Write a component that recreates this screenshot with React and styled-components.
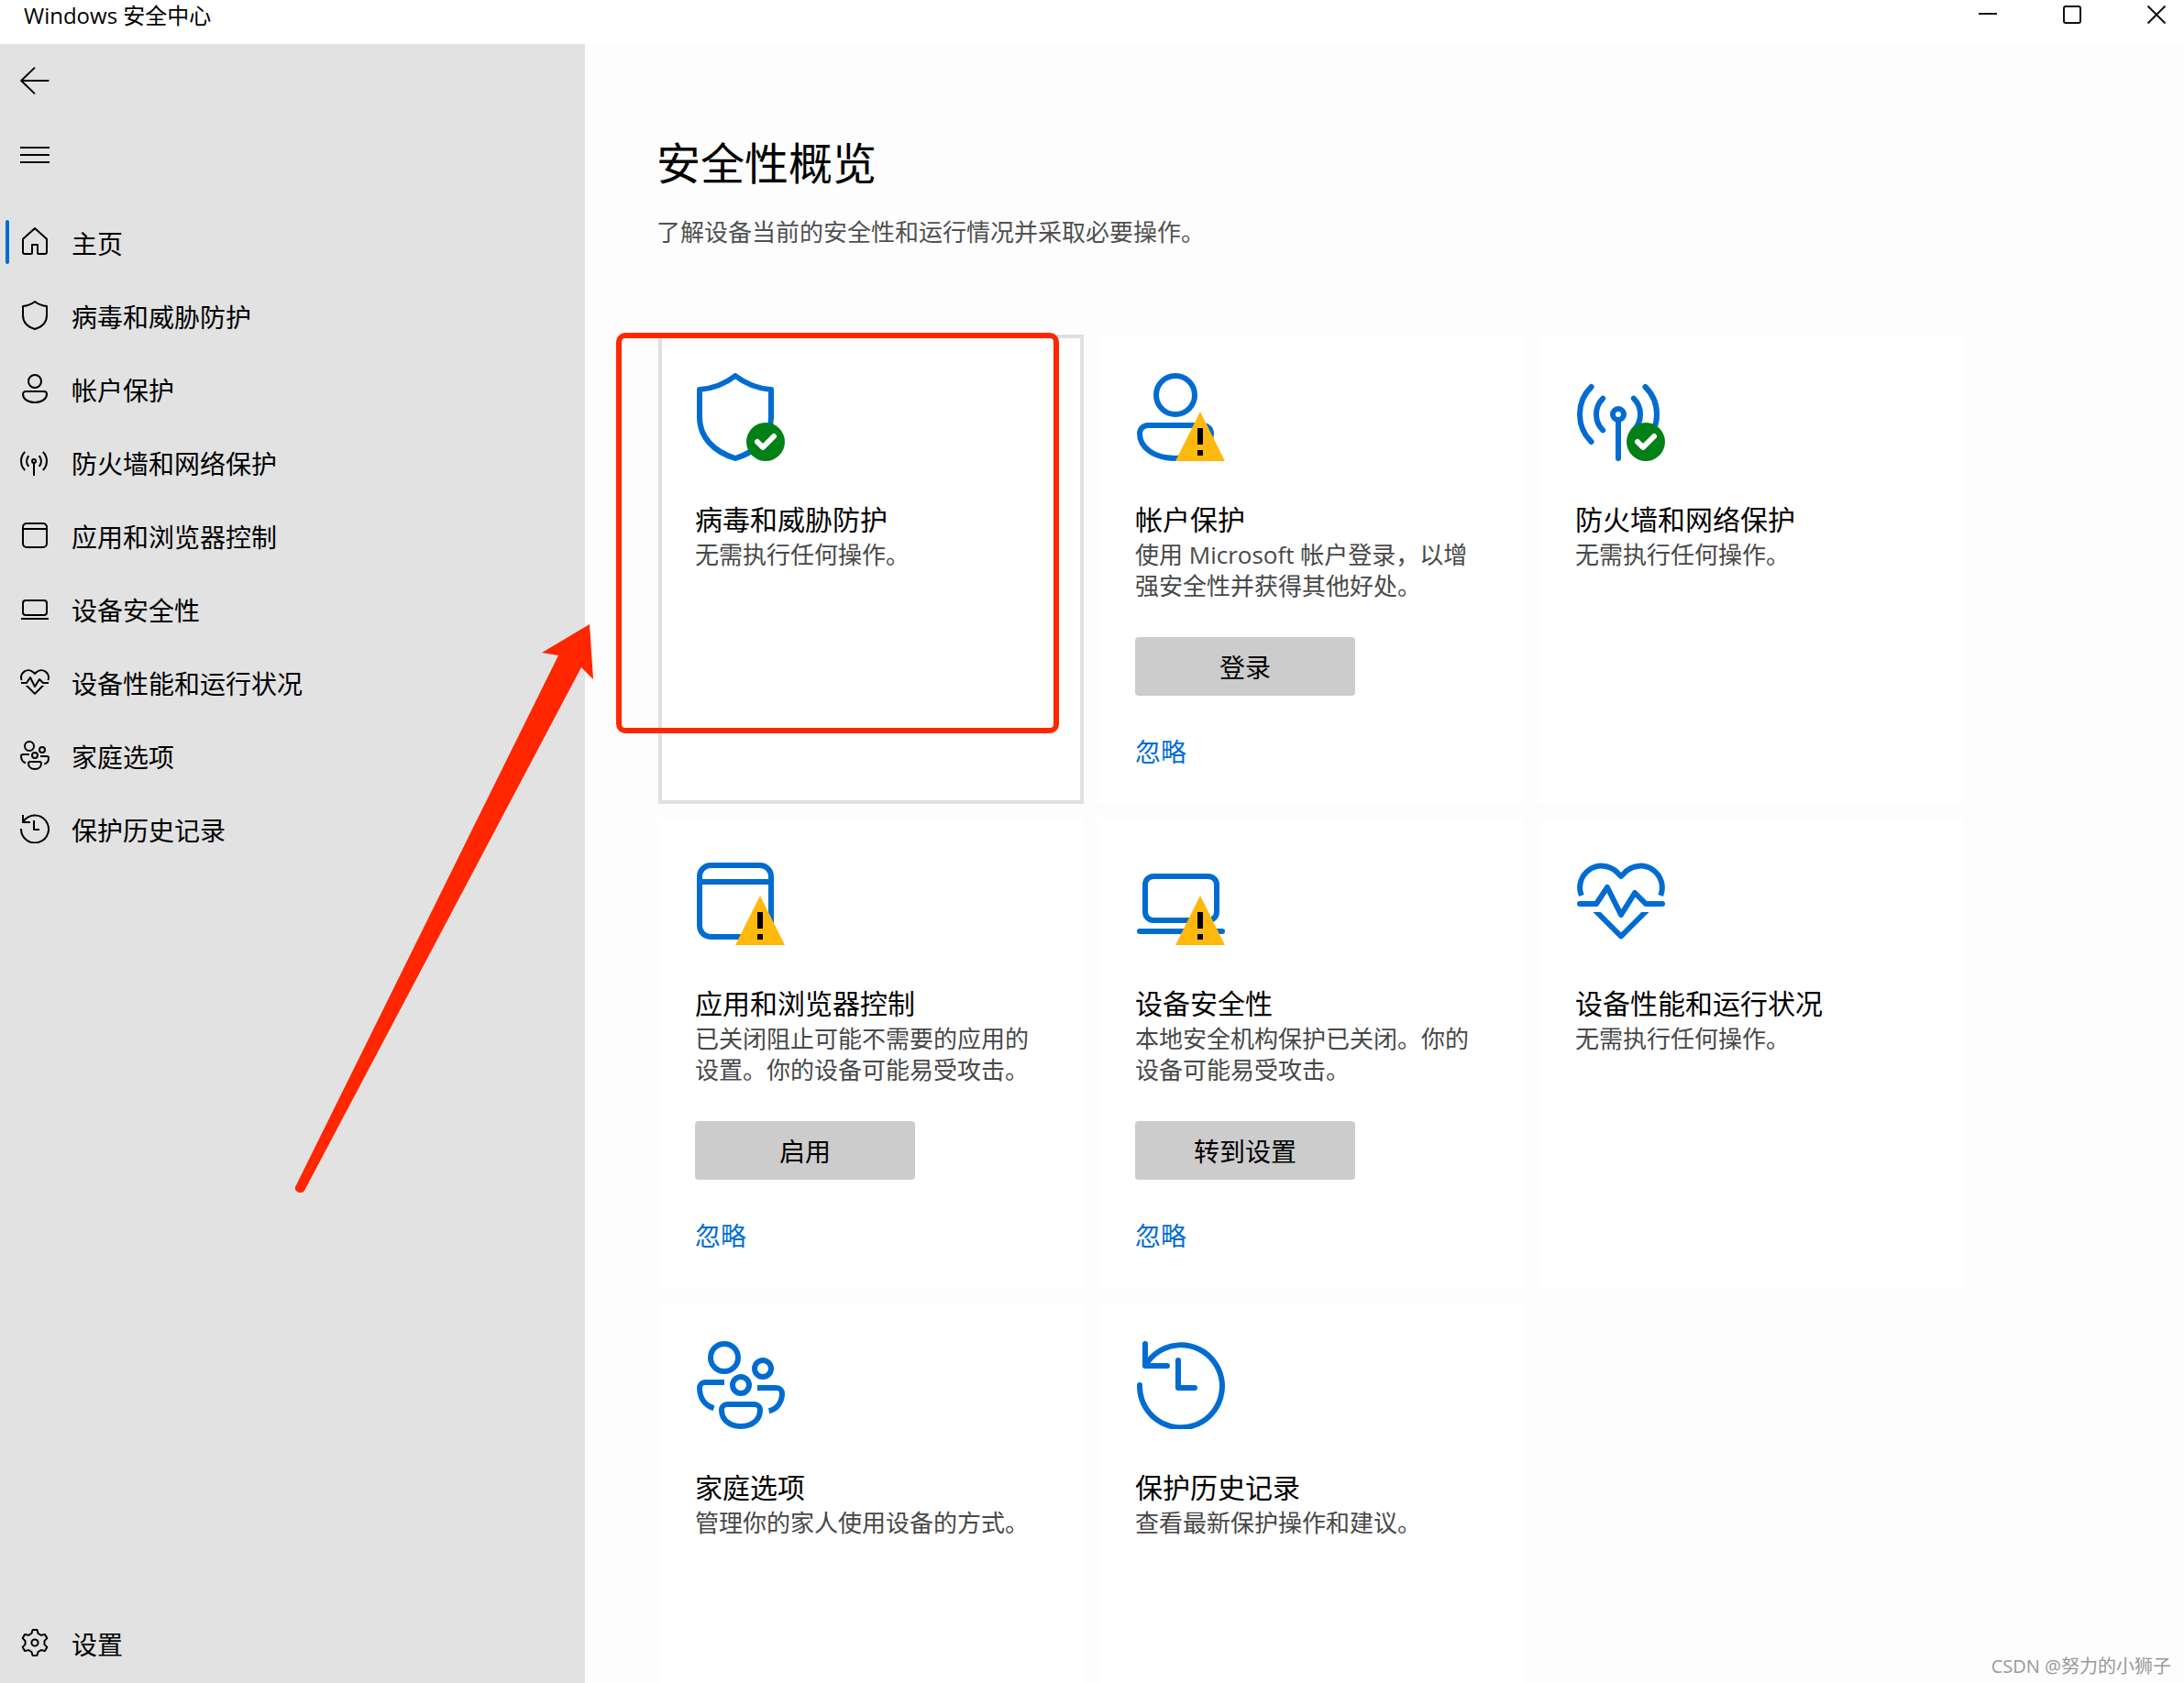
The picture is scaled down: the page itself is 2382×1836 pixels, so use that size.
import React, { useState } from 'react';
import styled, { createGlobalStyle } from 'styled-components';

// 齿轮轮廓:六个齿,每个齿由四个点组成
const TOOTH = [
  [-1.8, -5],
  [-1.2, -7],
  [1.2, -7],
  [1.8, -5],
];

const gearPoints = [0, 60, 120, 180, 240, 300]
  .flatMap(deg => {
    const a = (deg * Math.PI) / 180;
    return TOOTH.map(([x, y]) => [
      8 + x * Math.cos(a) - y * Math.sin(a),
      8 + x * Math.sin(a) + y * Math.cos(a),
    ]);
  })
  .map(p => p.join(','))
  .join(' ');

const shapes = {
  back: <path d="M15.7 8H.6M8 .8.6 8 8 15.2" />,
  menu: <path d="M0 4.5h16M0 8.5h16M0 12.5h16" />,
  home: (
    <path d="M8 .5 1.5 6.4v7.1a1 1 0 0 0 1 1H6a.5.5 0 0 0 .5-.5V9.5h3V14a.5.5 0 0 0 .5.5h3.5a1 1 0 0 0 1-1V6.4z" />
  ),
  shield: (
    <path d="M7 .5C5.2 1.9 2.9 2.8.5 3v5c0 3.7 2.6 6.3 6.5 7.5 3.9-1.2 6.5-3.8 6.5-7.5V3C11.1 2.8 8.8 1.9 7 .5z" />
  ),
  account: (
    <>
      <circle cx="7" cy="4" r="3.5" />
      <path d="M2 9.5h10a1.5 1.5 0 0 1 1.5 1.5c0 2.5-2.6 4.5-6.5 4.5S.5 13.5.5 11A1.5 1.5 0 0 1 2 9.5z" />
    </>
  ),
  network: (
    <>
      <circle cx="7.5" cy="7.5" r="1" />
      <path d="M7.5 8.5v7M2.6 2.5a7 7 0 0 0 0 10M4.7 4.6a4.1 4.1 0 0 0 0 5.8M10.3 4.6a4.1 4.1 0 0 1 0 5.8M12.4 2.5a7 7 0 0 1 0 10" />
    </>
  ),
  browser: (
    <>
      <rect x="0.5" y="1.5" width="13" height="13" rx="2" />
      <path d="M.5 4.5h13" />
    </>
  ),
  device: (
    <>
      <rect x="1.5" y="3.5" width="13" height="8" rx="1.5" />
      <path d="M.5 13.5h15" />
    </>
  ),
  health: (
    <>
      <path
        strokeLinecap="butt"
        d="M.8 7A3.95 3.95 0 0 1 7.1 2.6L8 3.5l.9-.9A3.95 3.95 0 0 1 15.2 7"
      />
      <path d="M.5 8.5h3l2-3 2.5 5 2.5-4 2 2h3" />
      <path
        fill="currentColor"
        stroke="none"
        d="M2.9 10h1.4L8 13.7l3.7-3.7h1.4l-4.75 4.75a.5.5 0 0 1-.7 0z"
      />
    </>
  ),
  family: (
    <>
      <circle cx="5" cy="3" r="2.5" />
      <circle cx="12" cy="5" r="1.5" />
      <circle cx="8" cy="8" r="1.5" />
      <path
        strokeLinecap="butt"
        d="M5 7.5H1.5a1 1 0 0 0-1 1C.5 10.4 1.5 11.7 3.1 12.2M11 8.5h3.5a1 1 0 0 1 1 1c0 1.6-.9 2.9-2.4 3.2"
      />
      <path d="M5.5 11.5h5a1 1 0 0 1 1 1c0 1.8-1.4 3-3.5 3s-3.5-1.2-3.5-3a1 1 0 0 1 1-1z" />
    </>
  ),
  history: (
    <path d="M.5 8A7.5 7.5 0 1 0 1.6 4.3M1.5.5v4h4M7.5 3.5v5h3" />
  ),
  settings: (
    <>
      <polygon points={gearPoints} />
      <circle cx="8" cy="8" r="1.8" />
    </>
  ),
};

const badges = {
  ok: (
    <>
      <circle cx="12.5" cy="12.5" r="3.5" fill="#008017" stroke="none" />
      <path d="M11 12.5l1 1 2-2" stroke="#fff" />
    </>
  ),
  warn: (
    <>
      <path d="M11.5 7 16 16H7z" fill="#ffb90d" stroke="none" />
      <path d="M11 10h1v3h-1zM11 14h1v1h-1z" fill="#000" stroke="none" />
    </>
  ),
};

// 宽 14 格的图标在侧栏里需要居中
const narrow = ['shield', 'account', 'browser'];

const nav = [
  { icon: 'home', text: '主页' },
  { icon: 'shield', text: '病毒和威胁防护' },
  { icon: 'account', text: '帐户保护' },
  { icon: 'network', text: '防火墙和网络保护' },
  { icon: 'browser', text: '应用和浏览器控制' },
  { icon: 'device', text: '设备安全性' },
  { icon: 'health', text: '设备性能和运行状况' },
  { icon: 'family', text: '家庭选项' },
  { icon: 'history', text: '保护历史记录' },
];

const tiles = [
  {
    icon: 'shield',
    badge: 'ok',
    title: '病毒和威胁防护',
    desc: '无需执行任何操作。',
    focused: true,
  },
  {
    icon: 'account',
    badge: 'warn',
    title: '帐户保护',
    desc: '使用 Microsoft 帐户登录，以增强安全性并获得其他好处。',
    action: '登录',
  },
  {
    icon: 'network',
    badge: 'ok',
    title: '防火墙和网络保护',
    desc: '无需执行任何操作。',
  },
  {
    icon: 'browser',
    badge: 'warn',
    title: '应用和浏览器控制',
    desc: '已关闭阻止可能不需要的应用的设置。你的设备可能易受攻击。',
    action: '启用',
  },
  {
    icon: 'device',
    badge: 'warn',
    title: '设备安全性',
    desc: '本地安全机构保护已关闭。你的设备可能易受攻击。',
    action: '转到设置',
  },
  { icon: 'health', title: '设备性能和运行状况', desc: '无需执行任何操作。' },
  { icon: 'family', title: '家庭选项', desc: '管理你的家人使用设备的方式。' },
  { icon: 'history', title: '保护历史记录', desc: '查看最新保护操作和建议。' },
];

export default function App() {
  const [current, setCurrent] = useState('主页');

  return (
    <Window>
      <GlobalStyle />
      <TitleBar>
        <Caption>Windows 安全中心</Caption>
        <Controls>
          <ControlBtn type="button" aria-label="最小化">
            <svg viewBox="0 0 20 20">
              <path d="M0 9h20" />
            </svg>
          </ControlBtn>
          <ControlBtn type="button" aria-label="最大化">
            <svg viewBox="0 0 20 20">
              <rect x="1" y="1" width="18" height="18" rx="2" />
            </svg>
          </ControlBtn>
          <ControlBtn type="button" aria-label="关闭">
            <svg viewBox="0 0 20 20">
              <path d="M.5.5l19 19M19.5.5l-19 19" />
            </svg>
          </ControlBtn>
        </Controls>
      </TitleBar>

      <Body>
        {/* 侧栏 */}
        <Sidebar>
          <IconBtn type="button" aria-label="返回">
            <NavIcon viewBox="0 0 16 16">{shapes.back}</NavIcon>
          </IconBtn>
          <IconBtn type="button" aria-label="菜单">
            <NavIcon viewBox="0 0 16 16">{shapes.menu}</NavIcon>
          </IconBtn>
          <NavList>
            {nav.map(({ icon, text }) => (
              <NavLink
                key={text}
                href="#"
                $active={current === text}
                onClick={() => setCurrent(text)}
              >
                <NavIcon
                  viewBox={narrow.includes(icon) ? '-1 0 16 16' : '0 0 16 16'}
                >
                  {shapes[icon]}
                </NavIcon>
                <NavText>{text}</NavText>
              </NavLink>
            ))}
          </NavList>
          <NavLink
            href="#"
            $active={current === '设置'}
            onClick={() => setCurrent('设置')}
          >
            <NavIcon viewBox="0 0 16 16">{shapes.settings}</NavIcon>
            <NavText>设置</NavText>
          </NavLink>
        </Sidebar>

        {/* 内容 */}
        <Main>
          <Heading>安全性概览</Heading>
          <Lead>了解设备当前的安全性和运行情况并采取必要操作。</Lead>
          <Tiles>
            {tiles.map(({ icon, badge, title, desc, action, focused }) => (
              <Tile key={title} $focused={focused}>
                <TileIcon viewBox="0 0 16 16">
                  {shapes[icon]}
                  {badges[badge]}
                </TileIcon>
                <TileTitle>{title}</TileTitle>
                <TileDesc>{desc}</TileDesc>
                {action && (
                  <>
                    <ActionBtn type="button">{action}</ActionBtn>
                    <Dismiss href="#">忽略</Dismiss>
                  </>
                )}
              </Tile>
            ))}
          </Tiles>
        </Main>
      </Body>

      {/* 标注 */}
      <Marker />
      <Arrow viewBox="0 0 340 640">
        <path d="M323 1 271 32l18 3L2 615c-1 3 2 6 6 6 3 0 4-2 5-4L314 48l13 13z" />
      </Arrow>
      <Watermark>CSDN @努力的小狮子</Watermark>
    </Window>
  );
}

const GlobalStyle = createGlobalStyle`
  * {
    box-sizing: border-box;
  }
  body {
    margin: 0;
    font-family: 'Open Sans', 'Noto Sans CJK SC', sans-serif;
    color: #000;
    background-color: #fdfdfd;
  }
  button {
    font-family: inherit;
    color: inherit;
    border: 0;
    padding: 0;
  }
  a {
    text-decoration: none;
  }
`;

const Window = styled.div`
  height: 100vh;
  display: flex;
  flex-direction: column;
  position: relative;
  overflow: hidden;
`;

const TitleBar = styled.header`
  height: 48px;
  flex-shrink: 0;
  padding: 0 20px 16px 26px;
  display: flex;
  align-items: center;
  justify-content: space-between;
  background-color: #fff;
`;

const Caption = styled.span`
  padding-top: 2px;
  font-size: 24px;
  line-height: 32px;
`;

const Controls = styled.div`
  display: flex;
  gap: 72px;
`;

const ControlBtn = styled.button`
  width: 20px;
  height: 20px;
  background: none;
  svg {
    display: block;
    fill: none;
    stroke: #111;
    stroke-width: 2;
  }
`;

const Body = styled.div`
  flex: 1;
  min-height: 0;
  display: flex;
`;

const Sidebar = styled.aside`
  width: 638px;
  flex-shrink: 0;
  padding-bottom: 4px;
  display: flex;
  flex-direction: column;
  background-color: #e2e2e2;
`;

const IconBtn = styled.button`
  width: 76px;
  height: 80px;
  display: flex;
  align-items: center;
  justify-content: center;
  background: none;
`;

const NavIcon = styled.svg`
  width: 32px;
  height: 32px;
  flex-shrink: 0;
  fill: none;
  stroke: currentColor;
  stroke-width: 1;
  stroke-linejoin: round;
`;

const NavList = styled.nav`
  flex: 1;
  margin-top: 16px;
`;

const NavLink = styled.a`
  height: 80px;
  padding-left: 22px;
  display: flex;
  align-items: center;
  gap: 24px;
  position: relative;
  color: #000;
  &::before {
    content: '';
    width: 4px;
    height: 48px;
    border-radius: 2px;
    background-color: ${props => (props.$active ? '#006cd0' : 'transparent')};
    position: absolute;
    left: 6px;
    top: 16px;
  }
`;

const NavText = styled.span`
  padding-top: 4px;
  font-size: 28px;
  line-height: 40px;
`;

const Main = styled.main`
  flex: 1;
  padding: 98px 80px 0 78px;
  overflow: hidden;
  background-color: #fdfdfd;
`;

const Heading = styled.h1`
  margin: 0;
  font-size: 48px;
  font-weight: 400;
  line-height: 64px;
`;

const Lead = styled.p`
  margin: 23px 0 92px;
  color: #505050;
  font-size: 26px;
  line-height: 40px;
`;

const Tiles = styled.div`
  margin-left: 2px;
  display: grid;
  grid-template-columns: repeat(auto-fill, 464px);
  grid-auto-rows: 512px;
  gap: 16px;
`;

const Tile = styled.section`
  padding: 38px 40px 0 36px;
  display: flex;
  flex-direction: column;
  align-items: flex-start;
  background-color: #fff;
  border: 4px solid ${props => (props.$focused ? '#e0e0e0' : 'transparent')};
`;

const TileIcon = styled.svg`
  width: 96px;
  height: 96px;
  margin: 0 2px 44px;
  color: #006cd0;
  fill: none;
  stroke: currentColor;
  stroke-width: 1;
  stroke-linecap: round;
  stroke-linejoin: round;
`;

const TileTitle = styled.h2`
  margin: 0;
  font-size: 30px;
  font-weight: 400;
  line-height: 40px;
`;

const TileDesc = styled.p`
  margin: 0;
  padding-top: 1px;
  color: #484848;
  font-size: 26px;
  line-height: 34px;
`;

const ActionBtn = styled.button`
  width: 240px;
  height: 64px;
  margin: 39px 0;
  border-radius: 4px;
  background-color: #ccc;
  font-size: 28px;
`;

const Dismiss = styled.a`
  color: #006cd0;
  font-size: 28px;
  line-height: 44px;
`;

const Marker = styled.div`
  width: 483px;
  height: 437px;
  border: 6px solid #ff2600;
  border-radius: 10px;
  position: absolute;
  left: 672px;
  top: 363px;
  pointer-events: none;
`;

const Arrow = styled.svg`
  width: 340px;
  height: 640px;
  fill: #ff2600;
  position: absolute;
  left: 320px;
  top: 680px;
  pointer-events: none;
`;

const Watermark = styled.div`
  color: #999;
  font-size: 20px;
  line-height: 28px;
  position: absolute;
  right: 14px;
  bottom: 4px;
`;
